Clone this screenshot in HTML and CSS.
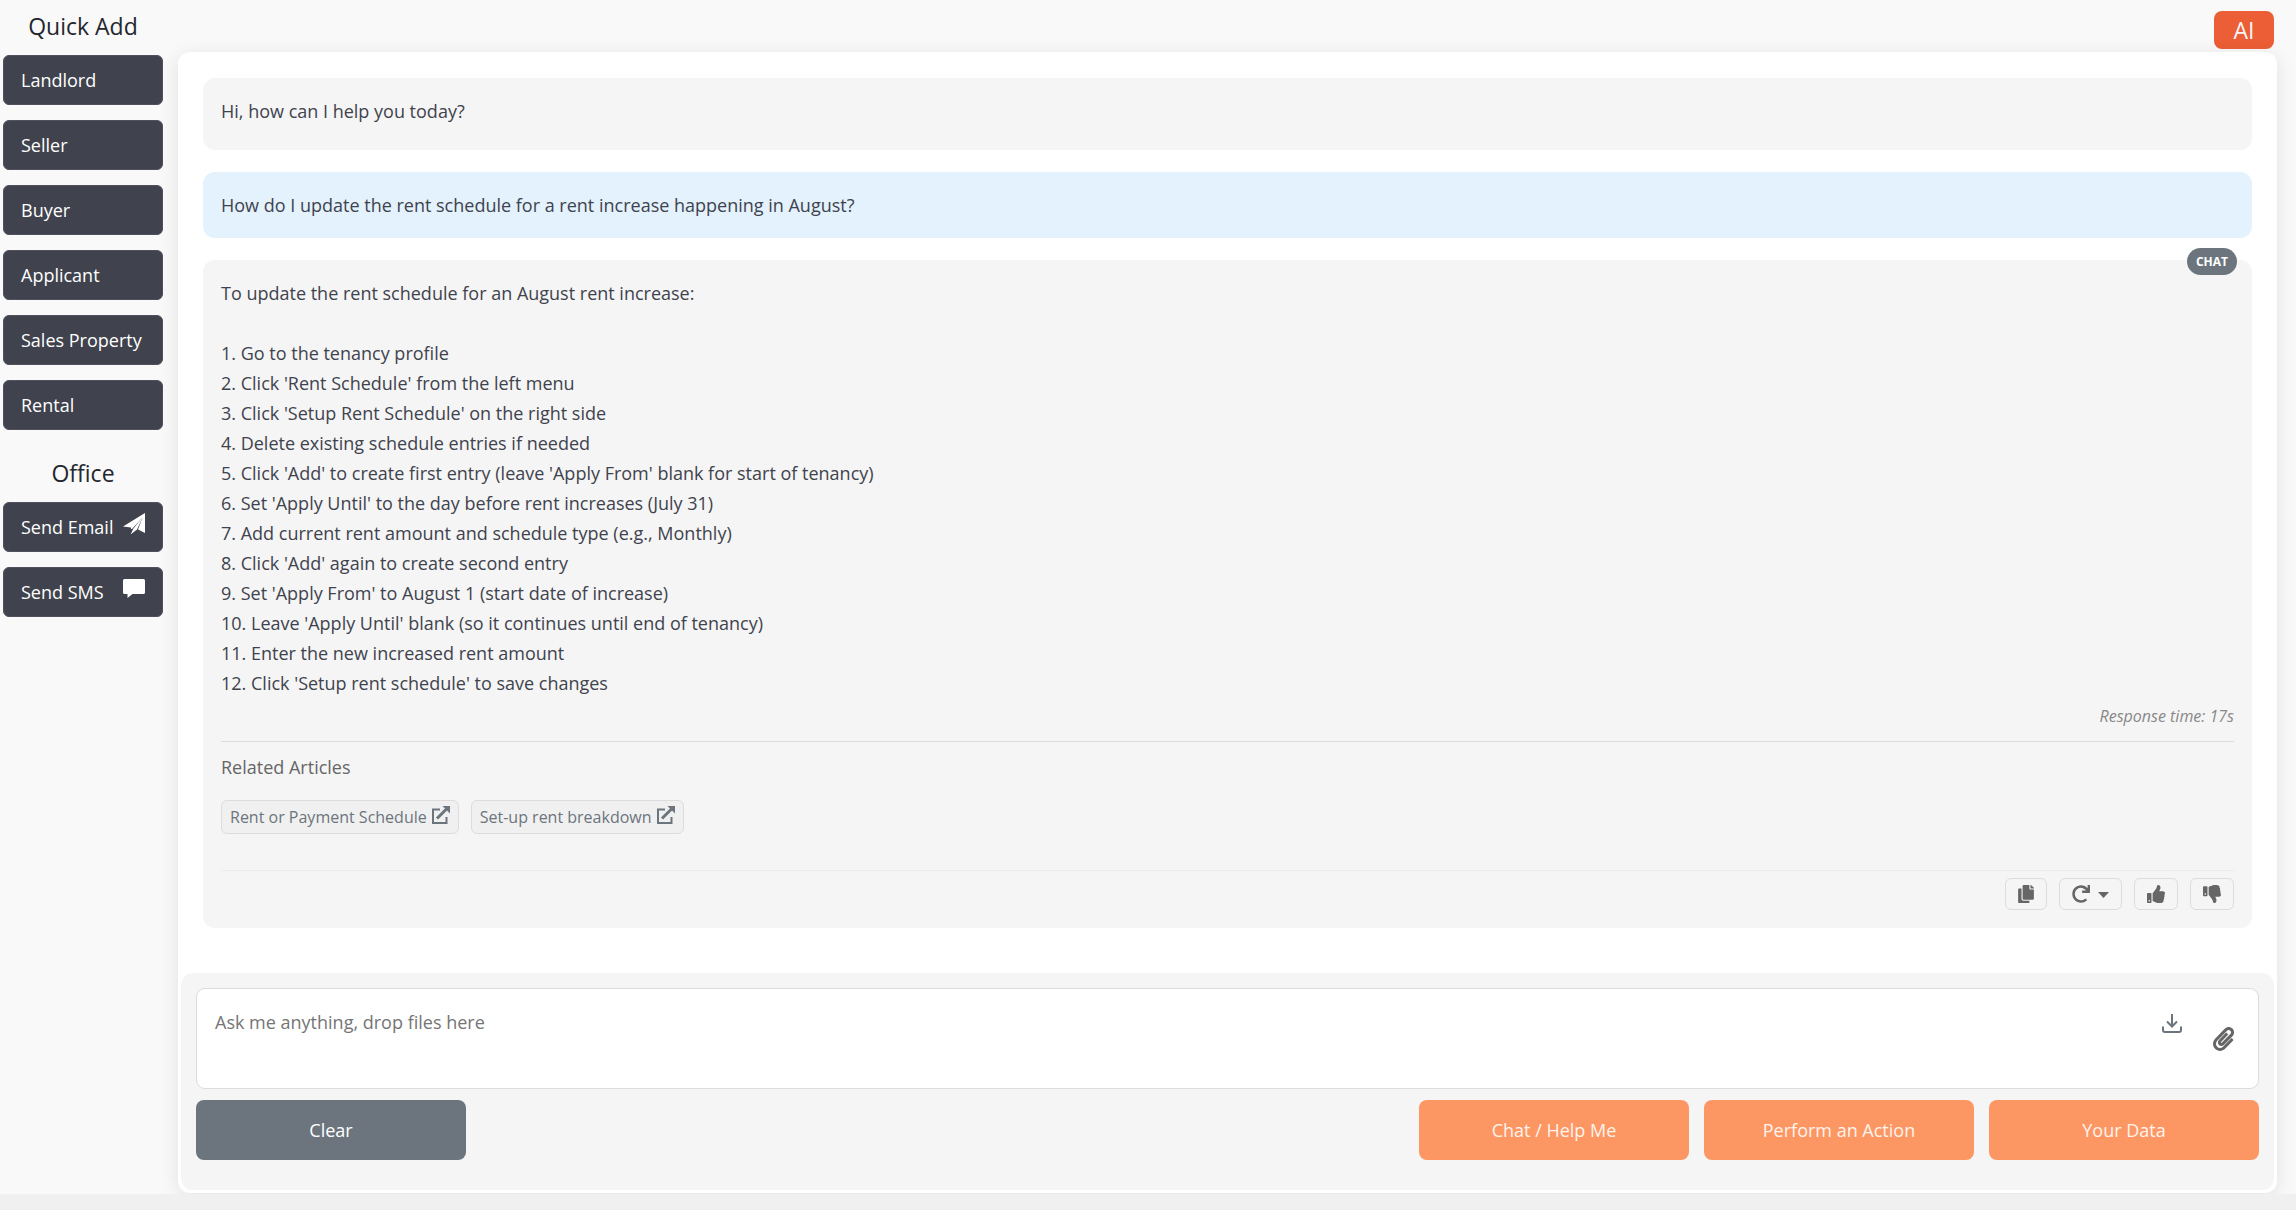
FILE: index.html
```html
<!DOCTYPE html>
<html lang="en">
<head>
    <meta charset="UTF-8">
    <meta name="viewport" content="width=device-width, initial-scale=1.0">
    <title>AI Assistant</title>
    <link rel="stylesheet" href="styles.css">
</head>
<body>
    <div class="page">
        <nav class="sidebar">
            <h2>Quick Add</h2>
            <div class="menu">
                <button type="button" class="menu-button">Landlord</button>
                <button type="button" class="menu-button">Seller</button>
                <button type="button" class="menu-button">Buyer</button>
                <button type="button" class="menu-button">Applicant</button>
                <button type="button" class="menu-button">Sales Property</button>
                <button type="button" class="menu-button">Rental</button>
            </div>
            <h2 class="office">Office</h2>
            <div class="menu">
                <button type="button" class="menu-button">Send Email
                    <svg viewBox="0 0 22 22" width="22" height="22"><path d="M22 0V20L15 16.500L19.500 4.500L9 16L8 16V14.500L0 13.500Z"/><path d="M20 3.500L10.500 15.500L7.500 21.500L14 16.500Z"/></svg>
                </button>
                <button type="button" class="menu-button">Send SMS
                    <svg viewBox="0 0 22 22" width="22" height="22"><path d="M1.500 1h19a1.500 1.500 0 0 1 1.500 1.500v12a1.500 1.500 0 0 1-1.500 1.500H9.500L4.500 20V16h-3A1.500 1.500 0 0 1 0 14.500v-12A1.500 1.500 0 0 1 1.500 1z"/></svg>
                </button>
            </div>
        </nav>

        <main class="main">
            <div class="top-bar">
                <button type="button" class="ai-button">AI</button>
            </div>

            <div class="chat-panel">
                <div class="messages">
                    <div class="message greeting">Hi, how can I help you today?</div>
                    <div class="message user">How do I update the rent schedule for a rent increase happening in August?</div>
                    <div class="message answer">
                        <span class="badge">CHAT</span>
                        <p>To update the rent schedule for an August rent increase:</p>
                        <ol class="steps">
                            <li>Go to the tenancy profile</li>
                            <li>Click 'Rent Schedule' from the left menu</li>
                            <li>Click 'Setup Rent Schedule' on the right side</li>
                            <li>Delete existing schedule entries if needed</li>
                            <li>Click 'Add' to create first entry (leave 'Apply From' blank for start of tenancy)</li>
                            <li>Set 'Apply Until' to the day before rent increases (July 31)</li>
                            <li>Add current rent amount and schedule type (e.g., Monthly)</li>
                            <li>Click 'Add' again to create second entry</li>
                            <li>Set 'Apply From' to August 1 (start date of increase)</li>
                            <li>Leave 'Apply Until' blank (so it continues until end of tenancy)</li>
                            <li>Enter the new increased rent amount</li>
                            <li>Click 'Setup rent schedule' to save changes</li>
                        </ol>
                        <div class="response-time">Response time: 17s</div>

                        <div class="related">
                            <h3>Related Articles</h3>
                            <div class="related-links">
                                <a href="#" class="article-link">Rent or Payment Schedule
                                    <svg viewBox="0 0 19 19" width="19" height="19"><path d="M9 3.500H2v13.500h13.500V11" fill="none" stroke="currentColor" stroke-width="2"/><path d="M6 12.500L15.500 3" fill="none" stroke="currentColor" stroke-width="3"/><path d="M11.500 0H19v7.500z"/></svg>
                                </a>
                                <a href="#" class="article-link">Set-up rent breakdown
                                    <svg viewBox="0 0 19 19" width="19" height="19"><path d="M9 3.500H2v13.500h13.500V11" fill="none" stroke="currentColor" stroke-width="2"/><path d="M6 12.500L15.500 3" fill="none" stroke="currentColor" stroke-width="3"/><path d="M11.500 0H19v7.500z"/></svg>
                                </a>
                            </div>
                        </div>

                        <div class="actions">
                            <button type="button" class="action-button" aria-label="Copy">
                                <svg viewBox="0 0 448 512" width="16" height="18"><path d="M320 448v40c0 13.255-10.745 24-24 24H24c-13.255 0-24-10.745-24-24V120c0-13.255 10.745-24 24-24h72v296c0 30.879 25.121 56 56 56h168zm0-344V0H152c-13.255 0-24 10.745-24 24v368c0 13.255 10.745 24 24 24h272c13.255 0 24-10.745 24-24V128H344c-13.200 0-24-10.800-24-24zm120.971-31.029L375.029 7.029A24 24 0 0 0 358.059 0H352v96h96v-6.059a24 24 0 0 0-7.029-16.970z"/></svg>
                            </button>
                            <button type="button" class="action-button" aria-label="Retry">
                                <svg viewBox="0 0 512 512" width="18" height="18"><path d="M500.330 0h-47.410a12 12 0 0 0-12 12.570l4 82.760A247.420 247.420 0 0 0 256 8C119.340 8 7.900 119.530 8 256.190 8.100 393.070 119.100 504 256 504a247.100 247.100 0 0 0 166.180-63.910 12 12 0 0 0 .48-17.430l-34-34a12 12 0 0 0-16.380-.55A176 176 0 1 1 402.100 157.800l-101.530-4.870a12 12 0 0 0-12.570 12v47.410a12 12 0 0 0 12 12h200.330a12 12 0 0 0 12-12V12a12 12 0 0 0-12-12z"/></svg>
                                <svg viewBox="0 0 11 18" width="11" height="18"><path d="M0 7h11L5.500 13z"/></svg>
                            </button>
                            <button type="button" class="action-button" aria-label="Good answer">
                                <svg viewBox="0 0 512 512" width="18" height="18"><path d="M104 224H24c-13.255 0-24 10.745-24 24v240c0 13.255 10.745 24 24 24h80c13.255 0 24-10.745 24-24V248c0-13.255-10.745-24-24-24zM64 472c-13.255 0-24-10.745-24-24s10.745-24 24-24 24 10.745 24 24-10.745 24-24 24zM384 81.452c0 42.416-25.970 66.208-33.277 94.548h101.723c33.397 0 59.397 27.746 59.553 58.098.084 17.938-7.546 37.249-19.439 49.197l-.11.11c9.836 23.337 8.237 56.037-9.308 79.469 8.681 25.895-.069 57.704-16.382 74.757 4.298 17.598 2.244 32.575-6.148 44.632C440.202 511.587 389.616 512 346.839 512l-2.845-.001c-48.287-.017-87.806-17.598-119.560-31.725-15.957-7.099-36.821-15.887-52.651-16.178-6.540-.12-11.783-5.457-11.783-11.998v-213.770c0-3.200 1.282-6.271 3.558-8.521 39.614-39.144 56.648-80.587 89.117-113.111 14.804-14.832 20.188-37.236 25.393-58.902C282.515 39.293 291.817 0 312 0c24 0 72 8 72 81.452z"/></svg>
                            </button>
                            <button type="button" class="action-button" aria-label="Bad answer">
                                <svg viewBox="0 0 512 512" width="18" height="18"><path d="M0 56v240c0 13.255 10.745 24 24 24h80c13.255 0 24-10.745 24-24V56c0-13.255-10.745-24-24-24H24C10.745 32 0 42.745 0 56zm40 200c0-13.255 10.745-24 24-24s24 10.745 24 24-10.745 24-24 24-24-10.745-24-24zm272 256c-20.183 0-29.485-39.293-33.931-57.795-5.206-21.666-10.589-44.070-25.393-58.902-32.469-32.524-49.503-73.967-89.117-113.111a11.980 11.980 0 0 1-3.558-8.521V59.901c0-6.541 5.243-11.878 11.783-11.998 15.831-.29 36.694-9.079 52.651-16.178C256.189 17.598 295.709.017 343.995 0h2.844c42.777 0 93.363.413 113.774 29.737 8.392 12.057 10.446 27.034 6.148 44.632 16.312 17.053 25.063 48.863 16.382 74.757 17.544 23.432 19.143 56.132 9.308 79.469l.11.11c11.893 11.949 19.523 31.259 19.439 49.197-.156 30.352-26.157 58.098-59.553 58.098H350.723C358.030 364.340 384 388.132 384 430.548 384 504 336 512 312 512z"/></svg>
                            </button>
                        </div>
                    </div>
                </div>

                <form class="composer">
                    <div class="input-box">
                        <textarea class="prompt" aria-label="Message" placeholder="Ask me anything, drop files here"></textarea>
                        <div class="input-icons">
                            <button type="button" class="icon-button download" aria-label="Download">
                                <svg viewBox="0 0 20 20" width="20" height="20"><path d="M10 0v12M5 7.500l5 5 5-5M1 12.500V16a2 2 0 0 0 2 2h14a2 2 0 0 0 2-2v-3.500"/></svg>
                            </button>
                            <button type="button" class="icon-button attach" aria-label="Attach a file">
                                <svg viewBox="0 0 448 512" width="21" height="24"><path d="M43.246 466.142c-58.430-60.289-57.341-157.511 1.386-217.581L254.392 34c44.316-45.332 116.351-45.336 160.671 0 43.890 44.894 43.943 117.329 0 162.276L232.214 383.128c-29.855 30.537-78.633 30.111-107.982-.998-28.275-29.970-27.368-77.473 1.452-106.953l143.743-146.835c6.182-6.314 16.312-6.422 22.626-.241l22.861 22.379c6.315 6.182 6.422 16.312.241 22.626L171.427 319.927c-4.932 5.045-5.236 13.428-.648 18.292 4.372 4.634 11.245 4.711 15.688.165l182.849-186.851c19.613-20.062 19.613-52.725-.011-72.798-19.189-19.627-49.957-19.637-69.154 0L90.390 293.295c-34.763 35.560-35.299 93.120-1.191 128.313 34.010 35.093 88.985 35.137 123.058.286l172.060-175.999c6.177-6.319 16.307-6.433 22.626-.256l22.877 22.364c6.319 6.177 6.434 16.307.256 22.626l-172.060 175.998c-59.576 60.938-155.943 60.216-214.770-.485z"/></svg>
                            </button>
                        </div>
                    </div>
                    <div class="form-buttons">
                        <button type="reset" class="form-button clear">Clear</button>
                        <button type="button" class="form-button">Chat / Help Me</button>
                        <button type="button" class="form-button">Perform an Action</button>
                        <button type="button" class="form-button">Your Data</button>
                    </div>
                </form>
            </div>
        </main>
    </div>
</body>
</html>
```
FILE: styles.css
```css
* {
    box-sizing: border-box;
}
body {
    font-family: "Open Sans", "Liberation Sans", sans-serif;
    font-size: 18px;
    line-height: 30px;
    margin: 0;
    color: #40434d;
    background-color: #f0f0f0;
}
button, textarea {
    font: inherit;
}
button {
    cursor: pointer;
}
svg {
    display: block;
    flex: none;
    fill: currentColor;
}
.page {
    display: flex;
    gap: 15px;
    min-height: calc(100vh - 16px);
    padding: 0 19px 1px 0;
    background-color: #f9f9f9;
}

/* Sidebar */
.sidebar {
    width: 163px;
    flex: none;
    padding-left: 3px;
}
.sidebar h2 {
    margin: 0;
    padding: 11px 0 14px;
    font-size: 23px;
    font-weight: normal;
    text-align: center;
    color: #24272e;
}
.sidebar .office {
    padding-top: 28px;
}
.menu {
    display: flex;
    flex-direction: column;
    gap: 15px;
}
.menu-button {
    display: flex;
    justify-content: space-between;
    align-items: center;
    height: 50px;
    padding: 0 17px;
    background-color: #40434d;
    color: white;
    border: 1px solid #50505f;
    border-radius: 6px;
    white-space: nowrap;
}
.menu-button svg {
    margin-bottom: 6px;
}

/* Chat */
.main {
    flex: 1;
    min-width: 0;
    display: flex;
    flex-direction: column;
}
.top-bar {
    display: flex;
    justify-content: flex-end;
    padding: 11px 3px 3px;
}
.ai-button {
    width: 60px;
    height: 38px;
    padding: 0;
    font-size: 23px;
    background-color: #eb5e36;
    color: #f5f5f5;
    border: none;
    border-radius: 8px;
}
.chat-panel {
    flex: 1;
    display: flex;
    flex-direction: column;
    padding: 3px;
    background-color: white;
    border-radius: 12px;
    box-shadow: 0 4px 20px rgba(0, 0, 0, 0.1);
}
.messages {
    flex: 1;
    display: flex;
    flex-direction: column;
    gap: 22px;
    padding: 23px 22px 45px;
}
.message {
    position: relative;
    padding: 18px;
    border-radius: 12px;
    background-color: #f5f5f5;
}
.greeting {
    padding-bottom: 24px;
}
.user {
    background-color: #e3f2fd;
}
.message p {
    margin: 0 0 30px;
}
.badge {
    position: absolute;
    top: -12px;
    right: 15px;
    padding: 0 9px;
    font-size: 12px;
    line-height: 27px;
    font-weight: bold;
    color: white;
    background-color: #6c757d;
    border-radius: 14px;
}
.steps {
    margin: 0;
    padding: 0;
    list-style: none;
    counter-reset: step;
}
.steps li {
    counter-increment: step;
}
.steps li::before {
    content: counter(step) ". ";
}
.response-time {
    padding: 6px 0 13px;
    font-size: 16px;
    line-height: 24px;
    font-style: italic;
    text-align: right;
    color: #888;
}
.related {
    border-top: 1px solid #dcdcdc;
    padding: 10px 0 36px;
}
.related h3 {
    margin: 0 0 18px;
    font-size: 18px;
    font-weight: normal;
    color: #666;
}
.related-links {
    display: flex;
    gap: 12px;
}
.article-link {
    display: flex;
    align-items: center;
    gap: 4px;
    height: 34px;
    padding: 0 8px;
    font-size: 16px;
    color: #6c757d;
    text-decoration: none;
    background-color: #f0f0f0;
    border: 1px solid #dcdcdc;
    border-radius: 6px;
}
.article-link svg {
    margin-bottom: 4px;
}
.actions {
    display: flex;
    justify-content: flex-end;
    gap: 12px;
    padding-top: 7px;
    border-top: 1px solid #ececec;
}
.action-button {
    display: flex;
    align-items: center;
    gap: 8px;
    height: 32px;
    padding: 0 12px;
    color: #666;
    background-color: transparent;
    border: 1px solid #dcdcdc;
    border-radius: 6px;
}

/* Message form */
.composer {
    padding: 15px 15px 30px;
    background-color: #f5f5f5;
    border-radius: 12px;
}
.input-box {
    display: flex;
    height: 101px;
    margin-bottom: 11px;
    background-color: white;
    border: 1px solid #dcdcdc;
    border-radius: 9px;
}
.prompt {
    flex: 1;
    padding: 18px;
    color: #40434d;
    background-color: transparent;
    border: none;
    outline: none;
    resize: none;
}
.prompt::placeholder {
    color: #757575;
}
.input-icons {
    display: flex;
    align-items: flex-start;
    gap: 31px;
    padding: 25px 24px 0 0;
}
.icon-button {
    padding: 0;
    color: #6c757d;
    background-color: transparent;
    border: none;
}
.download svg {
    fill: none;
    stroke: currentColor;
    stroke-width: 2;
}
.attach {
    padding-top: 13px;
    color: #666;
}
.form-buttons {
    display: flex;
    gap: 15px;
}
.form-button {
    width: 270px;
    height: 60px;
    color: #fff3ec;
    background-color: #fc9764;
    border: none;
    border-radius: 8px;
}
.clear {
    margin-right: auto;
    color: white;
    background-color: #6c757d;
}
```
